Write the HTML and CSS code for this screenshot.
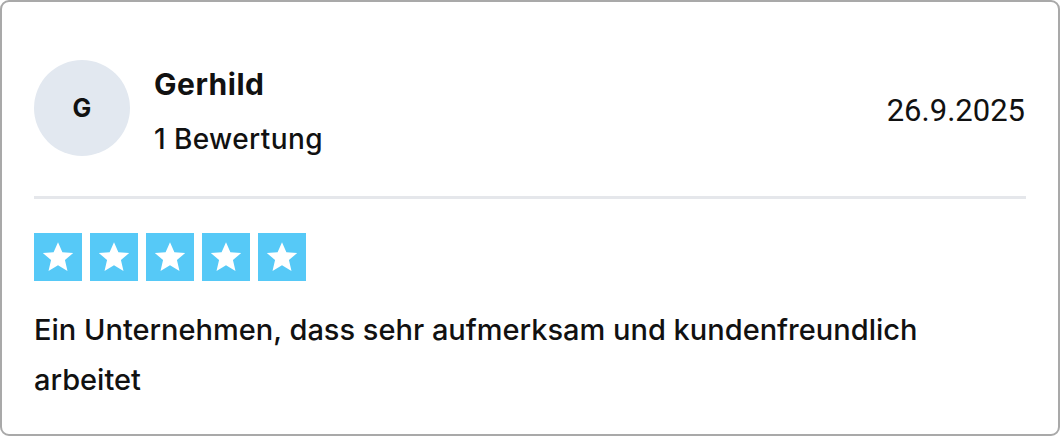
FILE: index.html
```html
<!DOCTYPE html>
<html lang="de">
<head>
<meta charset="utf-8">
<title>Bewertung</title>
<link rel="stylesheet" href="styles.css">
</head>
<body>
<div class="card">
  <div class="header">
    <div class="user">
      <div class="avatar">G</div>
      <div class="info">
        <div class="name">Gerhild</div>
        <div class="count">1 Bewertung</div>
      </div>
    </div>
    <div class="date">26.9.2025</div>
  </div>
  <div class="divider"></div>
  <div class="stars">
    <span class="star"><svg viewBox="0 0 24 24" width="34" height="34"><path d="M12 1.5l3.1 7.1 7.6.6-5.8 5 1.8 7.6L12 17.8l-6.7 4 1.8-7.6-5.8-5 7.6-.6z" fill="#fff"/></svg></span>
    <span class="star"><svg viewBox="0 0 24 24" width="34" height="34"><path d="M12 1.5l3.1 7.1 7.6.6-5.8 5 1.8 7.6L12 17.8l-6.7 4 1.8-7.6-5.8-5 7.6-.6z" fill="#fff"/></svg></span>
    <span class="star"><svg viewBox="0 0 24 24" width="34" height="34"><path d="M12 1.5l3.1 7.1 7.6.6-5.8 5 1.8 7.6L12 17.8l-6.7 4 1.8-7.6-5.8-5 7.6-.6z" fill="#fff"/></svg></span>
    <span class="star"><svg viewBox="0 0 24 24" width="34" height="34"><path d="M12 1.5l3.1 7.1 7.6.6-5.8 5 1.8 7.6L12 17.8l-6.7 4 1.8-7.6-5.8-5 7.6-.6z" fill="#fff"/></svg></span>
    <span class="star"><svg viewBox="0 0 24 24" width="34" height="34"><path d="M12 1.5l3.1 7.1 7.6.6-5.8 5 1.8 7.6L12 17.8l-6.7 4 1.8-7.6-5.8-5 7.6-.6z" fill="#fff"/></svg></span>
  </div>
  <p class="text">Ein Unternehmen, dass sehr aufmerksam und kundenfreundlich arbeitet</p>
</div>
</body>
</html>
```
FILE: styles.css
```css
* { box-sizing: border-box; }
html, body { margin: 0; padding: 0; background: #fff; }
body { font-family: Inter, Roboto, "Liberation Sans", sans-serif; color: #111; }
.card {
  width: 1060px;
  height: 436px;
  border: 2px solid #a9a9a9;
  border-radius: 9px;
  padding: 58px 32px 0;
  overflow: hidden;
}
.header { display: flex; align-items: center; justify-content: space-between; }
.user { display: flex; align-items: flex-start; gap: 24px; }
.avatar {
  width: 96px; height: 96px; border-radius: 50%;
  background: #e2e8f0;
  display: flex; align-items: center; justify-content: center;
  font-weight: 700; font-size: 25px; color: #111;
}
.info { display: flex; flex-direction: column; margin-top: 4px; }
.name { font-weight: 700; font-size: 30px; line-height: 40px; letter-spacing: 0.5px; }
.count { font-size: 28px; font-weight: 500; line-height: 32px; margin-top: 19px; letter-spacing: 0.4px; }
.date { font-family: Roboto, "Liberation Sans", sans-serif; font-size: 31px; font-weight: 400; line-height: 36px; margin-top: 5px; margin-right: 1px; }
.divider { height: 3px; background: #e5e7eb; margin-top: 40px; }
.stars { display: flex; gap: 8px; margin-top: 34px; }
.star {
  width: 48px; height: 48px; background: #56c9f7;
  display: flex; align-items: center; justify-content: center;
}
.text { margin: 24px 0 0; font-size: 29px; font-weight: 500; line-height: 50px; }
```
